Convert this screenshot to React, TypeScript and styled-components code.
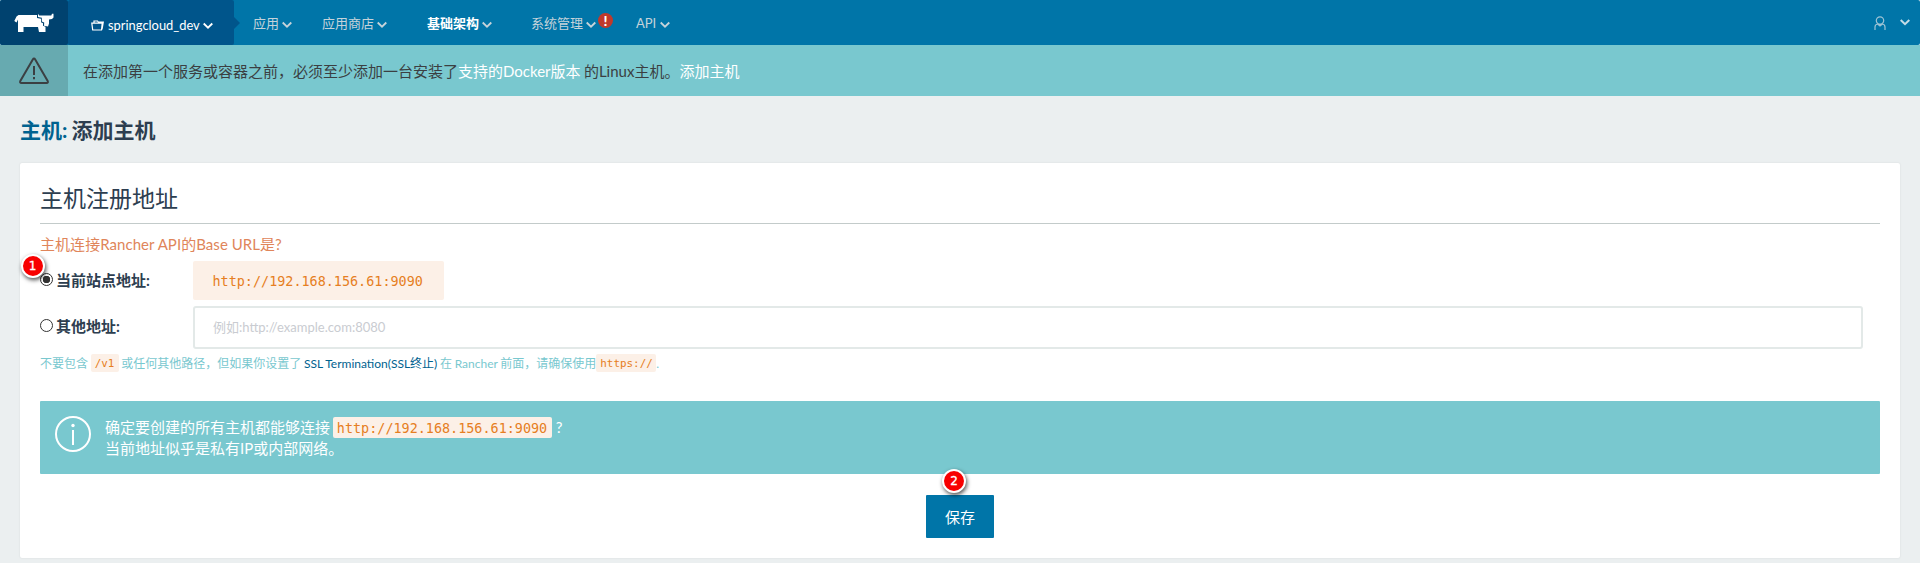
import React from 'react';
import styled, { createGlobalStyle } from 'styled-components';

const Global = createGlobalStyle`
  * { box-sizing: border-box; }
  body {
    margin: 0;
    background: #ebeff0;
    color: #2d3e50;
    font-family: Lato, "Noto Sans CJK SC", sans-serif;
    font-size: 15px;
    line-height: 21px;
  }
`;

const Page = styled.div`
  width: 1920px;
  height: 563px;
  overflow: hidden;
`;

const Nav = styled.nav`
  display: flex;
  height: 45px;
  background: #0075a8;
  border-radius: 2px;
`;

const Logo = styled.div`
  width: 68px;
  padding: 13px 0 0 14px;
  background: #00426f;
  border-radius: 2px;
  svg { display: block; }
`;

const Environment = styled.div`
  position: relative;
  display: flex;
  align-items: center;
  width: 166px;
  padding: 6px 0 0 23px;
  background: #00558b;
  color: #fff;
  font-size: 12.9px;
  border-radius: 2px;
  &::after {
    content: '';
    position: absolute;
    left: 166px;
    top: 17px;
    border: 6px solid transparent;
    border-left-color: #00558b;
    border-right-width: 0;
  }
`;

const EnvName = styled.span`
  width: 92px;
  margin: -2px 3px 0 4px;
  white-space: nowrap;
  line-height: 20px;
`;

const NavItem = styled.div<{ $left: number; $width: number; $active?: boolean }>`
  display: flex;
  align-items: center;
  height: 45px;
  margin-left: ${(p) => p.$left}px;
  color: ${(p) => (p.$active ? '#fff' : '#c5d3da')};
  font-size: 13px;
  font-weight: ${(p) => (p.$active ? 700 : 400)};
  white-space: nowrap;
  span { width: ${(p) => p.$width}px; line-height: 20px; }
  svg { margin: 4px 0 0 3px; color: #c5d3da; }
`;

const NavAlert = styled.b`
  width: 15px;
  height: 15px;
  margin: -5px 0 0 2px;
  border-radius: 50%;
  background: #c0392b;
  color: #fff;
  font-size: 14px;
  font-weight: 900;
  line-height: 15px;
  text-align: center;
`;

const Account = styled.div`
  display: flex;
  align-items: center;
  gap: 14px;
  margin-left: auto;
  padding-right: 10px;
`;

const Banner = styled.div`
  display: flex;
  height: 51px;
  background: #79c8cf;
  color: #3b3f42;
`;

const BannerIcon = styled.div`
  width: 68px;
  padding: 12px 0 0 18px;
  background: #67aab0;
`;

const BannerText = styled.div`
  padding: 16px 0 0 15px;
  white-space: pre;
  word-spacing: -0.5px;
  a { color: #fff; }
`;

const Title = styled.h1`
  margin: 0;
  height: 67px;
  padding: 19px 0 0 20px;
  font-size: 21px;
  line-height: 30px;
  font-weight: 700;
  white-space: pre;
  word-spacing: -1px;
  a { color: #00628f; }
`;

const Card = styled.main`
  height: 395px;
  margin: 0 20px;
  padding: 0 20px;
  background: #fff;
  border-radius: 2px;
  box-shadow: 0 0 2px rgba(0, 0, 0, 0.1);
`;

const SectionTitle = styled.h2`
  margin: 0;
  height: 61px;
  padding-top: 19px;
  border-bottom: 1px solid #c3cbca;
  font-size: 23px;
  line-height: 32px;
  font-weight: 400;
`;

const Question = styled.div`
  height: 37px;
  padding-top: 10px;
  color: #e0855a;
  letter-spacing: 0.05px;
`;

const OptionRow = styled.div<{ $height: number; $gap: number }>`
  display: flex;
  align-items: center;
  height: ${(p) => p.$height}px;
  margin-bottom: ${(p) => p.$gap}px;
`;

const OptionLabel = styled.label<{ $raise?: number }>`
  position: relative;
  display: flex;
  align-items: center;
  gap: 3px;
  width: 153px;
  margin-bottom: ${(p) => p.$raise ?? 0}px;
  font-weight: 700;
`;

const Radio = styled.span<{ $checked?: boolean }>`
  width: 13px;
  height: 13px;
  margin-bottom: 2px;
  border: 1px solid #333;
  border-radius: 50%;
  background: ${(p) => (p.$checked ? 'radial-gradient(circle, #333 3.5px, #fff 4px)' : '#fff')};
`;

const Code = styled.code`
  display: inline-block;
  background: #fcf0e7;
  color: #e67e22;
  font-family: "DejaVu Sans Mono", monospace;
  border-radius: 2px;
`;

const AddressCode = styled(Code)`
  width: 251px;
  height: 39px;
  padding-left: 19.500px;
  font-size: 13.45px;
  line-height: 41px;
`;

const InlineCode = styled(Code)<{ $width: number }>`
  width: ${(p) => p.$width}px;
  height: 21px;
  margin-left: -1px;
  padding-left: 4px;
  font-size: 13.45px;
  line-height: 23px;
`;

const SmallCode = styled(Code)<{ $width: number }>`
  width: ${(p) => p.$width}px;
  height: 18px;
  padding-left: 4px;
  font-size: 10.9px;
  line-height: 19px;
`;

const AddressInput = styled.input`
  width: 1670px;
  height: 43px;
  padding: 0 18px 2px;
  border: 2px solid #e3e9e8;
  border-radius: 3px;
  font: 13px Lato, "Noto Sans CJK SC", sans-serif;
  &::placeholder { color: #c9ccd1; opacity: 1; }
`;

const Help = styled.div`
  display: flex;
  align-items: center;
  height: 18px;
  color: #79c8cf;
  font-size: 12px;
  white-space: pre;
  word-spacing: -0.4px;
  a { color: #00628f; }
`;

const Notice = styled.section`
  display: flex;
  height: 73px;
  margin-top: 29px;
  padding: 15px 15px 0;
  background: #79c8cf;
  border-radius: 1px;
  color: #fff;
`;

const NoticeText = styled.div`
  margin-left: 14px;
  padding-top: 1px;
`;

const NoticeLine = styled.div`
  display: flex;
  height: 21px;
  white-space: pre;
`;

const Footer = styled.div`
  position: relative;
  display: flex;
  justify-content: center;
  padding-top: 21px;
`;

const SaveButton = styled.button`
  width: 68px;
  height: 43px;
  padding: 0;
  border: 0;
  border-radius: 1px;
  background: #0075a8;
  color: #fff;
  font: 15px Lato, "Noto Sans CJK SC", sans-serif;
`;

const StepBadge = styled.span<{ $x: number; $y: number }>`
  position: absolute;
  left: ${(p) => p.$x}px;
  top: ${(p) => p.$y}px;
  width: 24px;
  height: 24px;
  border: 2.5px solid #fff;
  border-radius: 50%;
  background: #f80000;
  box-shadow: 1px 2px 4px rgba(0, 0, 0, 0.7);
  color: #fff;
  font: 12px/20px "DejaVu Sans", sans-serif;
  -webkit-text-stroke: 0.3px #fff;
  text-align: center;
`;

const Chevron = () => (
  <svg width="10" height="7" viewBox="0 0 10 7" fill="none" stroke="currentColor" strokeWidth="1.8">
    <path d="M.7 1.500 5 5.700 9.300 1.500" />
  </svg>
);

const CowLogo = () => (
  <svg width="40" height="20" viewBox="0 0 40 20" fill="#fff">
    <path d="M4.500 2H23V5L27 5.700V9.200L29 10.200V12.800L31.500 13.800V19H25L24 14H9.500V19H4V6.500L2.500 9.500.300 8 2.500 3.500Z" />
    <path d="M24 .8 25.200 2.500H34.500L37.300 2.500 38 .8H39.500V4.500L38 6 35 6.500V10.500L34 13.500 30 12.800 30.200 9.500 27.800 8.500V4.800L24 4Z" />
  </svg>
);

const App = () => (
  <Page>
    <Global />
    <Nav>
      <Logo><CowLogo /></Logo>
      <Environment>
        <svg width="13" height="11" viewBox="0 0 13 11" fill="none" stroke="#fff" strokeWidth="1.2">
          <path d="M.8 3.200H11.200L10.500 10H1.700ZM3 3V1H6.500L7.300 2H12.300L11 9.500" />
        </svg>
        <EnvName>springcloud_dev</EnvName>
        <Chevron />
      </Environment>
      <NavItem $left={19} $width={26}><span>应用</span><Chevron /></NavItem>
      <NavItem $left={30} $width={52}><span>应用商店</span><Chevron /></NavItem>
      <NavItem $left={40} $width={52} $active><span>基础架构</span><Chevron /></NavItem>
      <NavItem $left={39} $width={52}><span>系统管理</span><Chevron /><NavAlert>!</NavAlert></NavItem>
      <NavItem $left={23} $width={21}><span>API</span><Chevron /></NavItem>
      <Account>
        <svg width="12" height="14" viewBox="0 0 12 14" fill="none" stroke="#9fc4d5" strokeWidth="1.200">
          <circle cx="6" cy="4.500" r="3.700" />
          <path d="M1 14V11Q1 8.500 3.500 8L6 10 8.500 8Q11 8.500 11 11V14M4 8.500H8" />
        </svg>
        <svg width="10" height="7" viewBox="0 0 10 7" fill="none" stroke="#c5dce6" strokeWidth="2">
          <path d="M.7 1 5 5.200 9.300 1" />
        </svg>
      </Account>
    </Nav>
    <Banner>
      <BannerIcon>
        <svg width="32" height="28" viewBox="0 0 32 28" fill="none" stroke="#3b3f42" strokeWidth="2" strokeLinejoin="round">
          <path d="M14.800 2.500Q16 .5 17.200 2.500L29.700 24Q30.500 26 28.500 26H3.500Q1.500 26 2.300 24Z" />
          <path d="M16 9V18M16 20V22.300" />
        </svg>
      </BannerIcon>
      <BannerText>在添加第一个服务或容器之前，必须至少添加一台安装了<a>支持的Docker版本</a> 的Linux主机。<a>添加主机</a></BannerText>
    </Banner>
    <Title><a>主机:</a> 添加主机</Title>
    <Card>
      <SectionTitle>主机注册地址</SectionTitle>
      <Question>主机连接Rancher API的Base URL是?</Question>
      <OptionRow $height={39} $gap={6}>
        <OptionLabel>
          <Radio $checked />当前站点地址:
          <StepBadge $x={-19.5} $y={-16}>1</StepBadge>
        </OptionLabel>
        <AddressCode>http://192.168.156.61:9090</AddressCode>
      </OptionRow>
      <OptionRow $height={43} $gap={5}>
        <OptionLabel $raise={3}><Radio />其他地址:</OptionLabel>
        <AddressInput placeholder="例如:http://example.com:8080" />
      </OptionRow>
      <Help>
        不要包含 <SmallCode $width={28}>/v1</SmallCode> 或任何其他路径，但如果你设置了 <a>SSL Termination(SSL终止)</a> 在 Rancher 前面，请确保使用<SmallCode $width={60}>https://</SmallCode>.
      </Help>
      <Notice>
        <svg width="36" height="36" viewBox="0 0 36 36" fill="none" stroke="#fff" strokeWidth="2">
          <circle cx="18" cy="18" r="17" />
          <path d="M18 14V29" />
          <circle cx="18" cy="9.500" r="1.700" fill="#fff" stroke="none" />
        </svg>
        <NoticeText>
          <NoticeLine>确定要创建的所有主机都能够连接 <InlineCode $width={219}>http://192.168.156.61:9090</InlineCode> ?</NoticeLine>
          <NoticeLine>当前地址似乎是私有IP或内部网络。</NoticeLine>
        </NoticeText>
      </Notice>
      <Footer>
        <SaveButton>保存</SaveButton>
        <StepBadge $x={902} $y={-5}>2</StepBadge>
      </Footer>
    </Card>
  </Page>
);

export default App;
